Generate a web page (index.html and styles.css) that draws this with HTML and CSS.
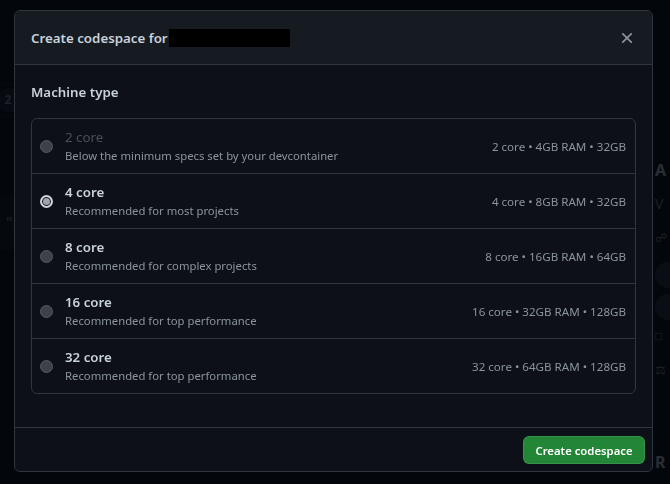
FILE: index.html
```html
<!DOCTYPE html>
<html lang="en">
<head>
    <meta charset="UTF-8">
    <meta name="viewport" content="width=device-width, initial-scale=1.0">
    <title>Create codespace</title>
    <link rel="stylesheet" href="styles.css">
</head>
<body>
    <div class="page">
        <div class="main-col">
            <div class="step-row"><span class="step-num">2</span></div>
            <div class="code-block">"E</div>
        </div>
        <div class="side-col">
            <h3 class="side-title">A</h3>
            <p class="side-text">V</p>
            <p class="side-text side-icon">&#9741;</p>
            <div class="side-avatar"></div>
            <div class="side-avatar"></div>
            <p class="side-text side-icon">&#9633;</p>
            <p class="side-text side-icon">&#9878;</p>
            <h3 class="side-title side-bottom">R</h3>
        </div>
    </div>

    <div class="backdrop"></div>

    <div class="modal">
        <div class="modal-header">
            <h2 class="modal-title">Create codespace for<span class="redacted"></span></h2>
            <button class="close-btn" aria-label="Close">
                <svg width="18" height="18" viewBox="0 0 16 16" fill="currentColor"><path d="M3.72 3.72a.75.75 0 0 1 1.06 0L8 6.94l3.22-3.22a.749.749 0 0 1 1.275.326.749.749 0 0 1-.215.734L9.06 8l3.22 3.22a.749.749 0 0 1-.326 1.275.749.749 0 0 1-.734-.215L8 9.06l-3.22 3.22a.751.751 0 0 1-1.042-.018.751.751 0 0 1-.018-1.042L6.94 8 3.72 4.78a.75.75 0 0 1 0-1.06Z"></path></svg>
            </button>
        </div>

        <div class="modal-body">
            <div class="field-label">Machine type</div>
            <div class="machine-list">
                <label class="machine disabled">
                    <span class="radio"></span>
                    <span class="machine-info">
                        <span class="machine-name">2 core</span>
                        <span class="machine-desc">Below the minimum specs set by your devcontainer</span>
                    </span>
                    <span class="machine-specs">2 core &bull; 4GB RAM &bull; 32GB</span>
                </label>
                <label class="machine">
                    <span class="radio checked"></span>
                    <span class="machine-info">
                        <span class="machine-name">4 core</span>
                        <span class="machine-desc">Recommended for most projects</span>
                    </span>
                    <span class="machine-specs">4 core &bull; 8GB RAM &bull; 32GB</span>
                </label>
                <label class="machine">
                    <span class="radio"></span>
                    <span class="machine-info">
                        <span class="machine-name">8 core</span>
                        <span class="machine-desc">Recommended for complex projects</span>
                    </span>
                    <span class="machine-specs">8 core &bull; 16GB RAM &bull; 64GB</span>
                </label>
                <label class="machine">
                    <span class="radio"></span>
                    <span class="machine-info">
                        <span class="machine-name">16 core</span>
                        <span class="machine-desc">Recommended for top performance</span>
                    </span>
                    <span class="machine-specs">16 core &bull; 32GB RAM &bull; 128GB</span>
                </label>
                <label class="machine">
                    <span class="radio"></span>
                    <span class="machine-info">
                        <span class="machine-name">32 core</span>
                        <span class="machine-desc">Recommended for top performance</span>
                    </span>
                    <span class="machine-specs">32 core &bull; 64GB RAM &bull; 128GB</span>
                </label>
            </div>
        </div>

        <div class="modal-footer">
            <button class="btn-primary">Create codespace</button>
        </div>
    </div>
</body>
</html>
```

FILE: styles.css
```css
body {
    margin: 0;
    padding: 0;
    font-family: "Noto Sans", "Open Sans", sans-serif;
    background: #0d1117;
    color: #c9d1d9;
    width: 670px;
    height: 484px;
    overflow: hidden;
}

/* page behind the dialog */
.page {
    display: flex;
    height: 484px;
}

.main-col {
    flex: 1;
    padding-top: 84px;
}

.step-row {
    border-top: 1px solid #21262d;
    border-bottom: 1px solid #21262d;
    padding: 2px 0;
    height: 26px;
}

.step-num {
    display: inline-block;
    width: 24px;
    height: 24px;
    line-height: 24px;
    border-radius: 50%;
    background: #21262d;
    color: #8b949e;
    font-size: 12px;
    font-weight: bold;
    text-align: center;
    margin-left: -4px;
}

.code-block {
    margin-top: 80px;
    background: #161b22;
    height: 54px;
    line-height: 54px;
    color: #8b949e;
    font-size: 16px;
    padding-left: 6px;
}

.side-col {
    width: 15px;
    padding: 160px 0 0 3px;
    overflow: hidden;
}

.side-title {
    margin: 0 0 14px;
    font-size: 16px;
    line-height: 20px;
    color: #c9d1d9;
}

.side-text {
    margin: 0 0 14px;
    font-size: 14px;
    line-height: 20px;
    color: #8b949e;
}

.side-icon {
    font-size: 12px;
}

.side-avatar {
    width: 26px;
    height: 26px;
    border-radius: 50%;
    background: #30363d;
    margin-bottom: 6px;
}

.side-bottom {
    margin-top: 72px;
}

.backdrop {
    position: fixed;
    inset: 0;
    background: rgba(1, 4, 9, 0.8);
}

/* dialog */
.modal {
    position: fixed;
    left: 14px;
    top: 10px;
    width: 639px;
    height: 462px;
    box-sizing: border-box;
    background: #0d1117;
    border: 1px solid #30363d;
    border-radius: 6px;
    display: flex;
    flex-direction: column;
    overflow: hidden;
}

.modal-header {
    display: flex;
    align-items: center;
    justify-content: space-between;
    height: 53px;
    padding: 0 12px 0 16px;
    background: #161b22;
    border-bottom: 1px solid #30363d;
    flex-shrink: 0;
}

.modal-title {
    margin: 0;
    font-size: 13.3px;
    font-weight: 600;
    color: #c9d1d9;
    display: flex;
    align-items: center;
}

.redacted {
    display: inline-block;
    width: 121px;
    height: 18px;
    background: #000;
    margin-left: 1px;
}

.close-btn {
    background: none;
    border: none;
    color: #8b949e;
    padding: 4px;
    display: flex;
    cursor: pointer;
}

.modal-body {
    flex: 1;
    padding: 17px 16px 0;
}

.field-label {
    font-size: 13.3px;
    font-weight: 600;
    line-height: 20px;
    margin-bottom: 16px;
    color: #c9d1d9;
}

.machine-list {
    border: 1px solid #30363d;
    border-radius: 6px;
}

.machine {
    display: flex;
    align-items: center;
    height: 54px;
    padding: 0 9px 0 8px;
    border-top: 1px solid #30363d;
}

.machine:first-child {
    border-top: none;
}

.radio {
    width: 13px;
    height: 13px;
    border-radius: 50%;
    box-sizing: border-box;
    background: #3d4148;
    border: 1px solid #555a61;
    flex-shrink: 0;
    margin-right: 12px;
}

.radio.checked {
    background: #9ea4ab;
    border: 2px solid #d0d4d9;
    box-shadow: inset 0 0 0 1px #0d1117;
}

.machine-info {
    display: flex;
    flex-direction: column;
    align-items: flex-start;
}

.machine-name {
    font-size: 13.3px;
    font-weight: 600;
    line-height: 20px;
    color: #c9d1d9;
}

.machine-desc {
    font-size: 11.3px;
    line-height: 18px;
    color: #8b949e;
}

.disabled .machine-name {
    font-weight: 400;
    color: #484f58;
}

.machine-specs {
    margin-left: auto;
    font-size: 11.6px;
    color: #8b949e;
    white-space: nowrap;
}

.modal-footer {
    display: flex;
    justify-content: flex-end;
    padding: 8px 7px 7px;
    border-top: 1px solid #30363d;
}

.btn-primary {
    height: 28px;
    width: 122px;
    font-family: inherit;
    font-size: 11.3px;
    font-weight: 600;
    color: #fff;
    background: #238636;
    border: 1px solid rgba(240, 246, 252, 0.1);
    border-radius: 6px;
    cursor: pointer;
}
```
